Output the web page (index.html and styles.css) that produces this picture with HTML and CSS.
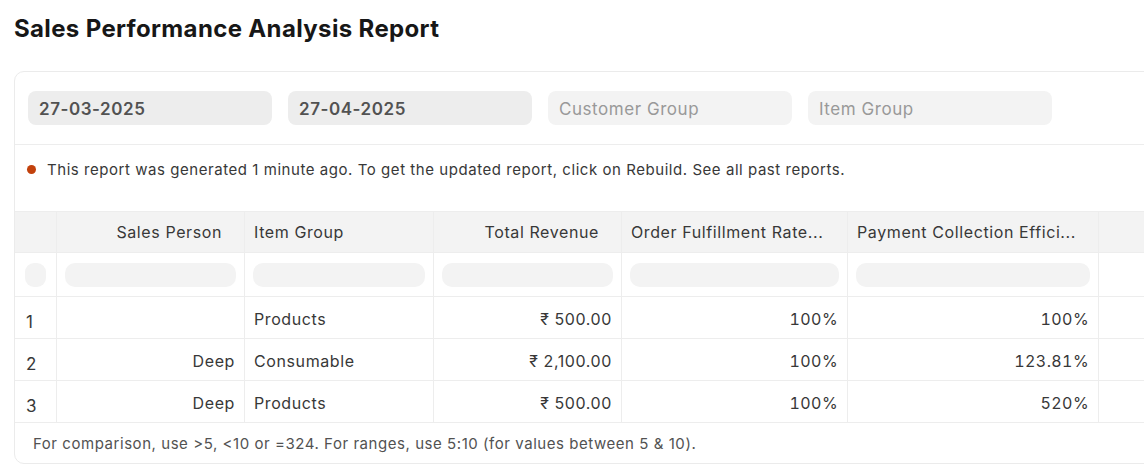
FILE: index.html
```html
<!DOCTYPE html>
<html lang="en">
<head>
<meta charset="utf-8">
<title>Sales Performance Analysis Report</title>
<link rel="stylesheet" href="styles.css">
</head>
<body>
<div class="page">
  <h1 class="title">Sales Performance Analysis Report</h1>
  <div class="card">
    <div class="filters">
      <div class="field field-filled">27-03-2025</div>
      <div class="field field-filled">27-04-2025</div>
      <div class="field field-empty">Customer Group</div>
      <div class="field field-empty">Item Group</div>
    </div>
    <div class="notice">
      <span class="dot"></span>
      <span>This report was generated 1 minute ago. To get the updated report, click on Rebuild. See all past reports.</span>
    </div>
    <div class="table">
      <div class="row head">
        <div class="cell num"></div>
        <div class="cell right hcell">Sales Person</div>
        <div class="cell">Item Group</div>
        <div class="cell right hcell">Total Revenue</div>
        <div class="cell">Order Fulfillment Rate...</div>
        <div class="cell">Payment Collection Effici...</div>
        <div class="cell rest"></div>
      </div>
      <div class="row filter-row">
        <div class="cell num"><span class="pill pill-round"></span></div>
        <div class="cell"><span class="pill"></span></div>
        <div class="cell"><span class="pill"></span></div>
        <div class="cell"><span class="pill"></span></div>
        <div class="cell"><span class="pill"></span></div>
        <div class="cell"><span class="pill"></span></div>
        <div class="cell blank"></div>
      </div>
      <div class="row data">
        <div class="cell num">1</div>
        <div class="cell right"></div>
        <div class="cell">Products</div>
        <div class="cell right">₹ 500.00</div>
        <div class="cell right pct">100%</div>
        <div class="cell right pct">100%</div>
        <div class="cell blank"></div>
      </div>
      <div class="row data">
        <div class="cell num">2</div>
        <div class="cell right">Deep</div>
        <div class="cell">Consumable</div>
        <div class="cell right">₹ 2,100.00</div>
        <div class="cell right pct">100%</div>
        <div class="cell right pct">123.81%</div>
        <div class="cell blank"></div>
      </div>
      <div class="row data">
        <div class="cell num">3</div>
        <div class="cell right">Deep</div>
        <div class="cell">Products</div>
        <div class="cell right">₹ 500.00</div>
        <div class="cell right pct">100%</div>
        <div class="cell right pct">520%</div>
        <div class="cell blank"></div>
      </div>
    </div>
    <div class="footer">For comparison, use &gt;5, &lt;10 or =324. For ranges, use 5:10 (for values between 5 &amp; 10).</div>
  </div>
</div>
</body>
</html>
```

FILE: styles.css
```css
* { box-sizing: border-box; }
html, body {
  margin: 0;
  padding: 0;
  background: #ffffff;
  overflow: hidden;
}
body {
  font-family: Inter, "Noto Sans", "Liberation Sans", sans-serif;
  color: #383838;
  width: 1144px;
  height: 468px;
}
.page {
  padding: 14px 0 0 14px;
}
.title {
  margin: 0;
  font-size: 24px;
  font-weight: 700;
  color: #171717;
  line-height: 30px;
  letter-spacing: 0.35px;
}
.card {
  margin-top: 27px;
  width: 1180px;
  height: 393px;
  border: 1px solid #ebebeb;
  border-radius: 10px;
  overflow: hidden;
  display: flex;
  flex-direction: column;
}
.filters {
  display: flex;
  gap: 16px;
  padding: 19px 13px 19px 13px;
  border-bottom: 1px solid #ededed;
}
.field {
  width: 244px;
  height: 34px;
  border-radius: 8px;
  padding: 1px 11px 0;
  display: flex;
  align-items: center;
  font-size: 17px;
  letter-spacing: 0.55px;
}
.field-filled {
  background: #ededed;
  color: #525252;
  font-weight: 600;
}
.field-empty {
  background: #f3f3f3;
  color: #999999;
}
.notice {
  display: flex;
  align-items: center;
  gap: 11px;
  height: 66px;
  padding: 0 0 18px 12px;
  font-size: 15px;
  letter-spacing: 0.55px;
  color: #383838;
}
.dot {
  width: 9px;
  height: 9px;
  border-radius: 50%;
  background: #c2410c;
  flex: none;
}
.table {
  display: flex;
  flex-direction: column;
}
.row {
  display: grid;
  grid-template-columns: 42px 188px 189px 188px 226px 251px 1fr;
}
.cell {
  display: flex;
  align-items: center;
  padding: 0 9px;
  font-size: 16px;
  letter-spacing: 0.6px;
  color: #383838;
  border-right: 1px solid #ededed;
  white-space: nowrap;
  overflow: hidden;
}
.right { justify-content: flex-end; }
.head {
  height: 42px;
  background: #f3f3f3;
  border-top: 1px solid #ededed;
  border-bottom: 1px solid #ededed;
}
.head .cell { color: #383838; }
.hcell { padding-right: 22px; }
.head .rest { border-right: none; }
.filter-row {
  height: 44px;
  border-bottom: 1px solid #ededed;
}
.filter-row .cell { padding: 0 8px; }
.filter-row .num { padding: 0 10px; }
.pill {
  display: block;
  width: 100%;
  height: 24px;
  border-radius: 10px;
  background: #f3f3f3;
}
.pill-round { border-radius: 9px; }
.data {
  height: 42px;
  border-bottom: 1px solid #ededed;
}
.data .cell { padding-top: 2px; }
.data .num {
  padding: 8px 0 0 11px;
  font-size: 17px;
  color: #383838;
}
.pct {
  font-variant-numeric: tabular-nums;
  letter-spacing: 0.4px;
}
.blank { border-right: none; }
.filter-row .blank, .data .blank { background: #fff; }
.footer {
  padding: 0 18px;
  height: 40px;
  display: flex;
  align-items: center;
  font-size: 15px;
  letter-spacing: 0.55px;
  color: #525252;
}
```
